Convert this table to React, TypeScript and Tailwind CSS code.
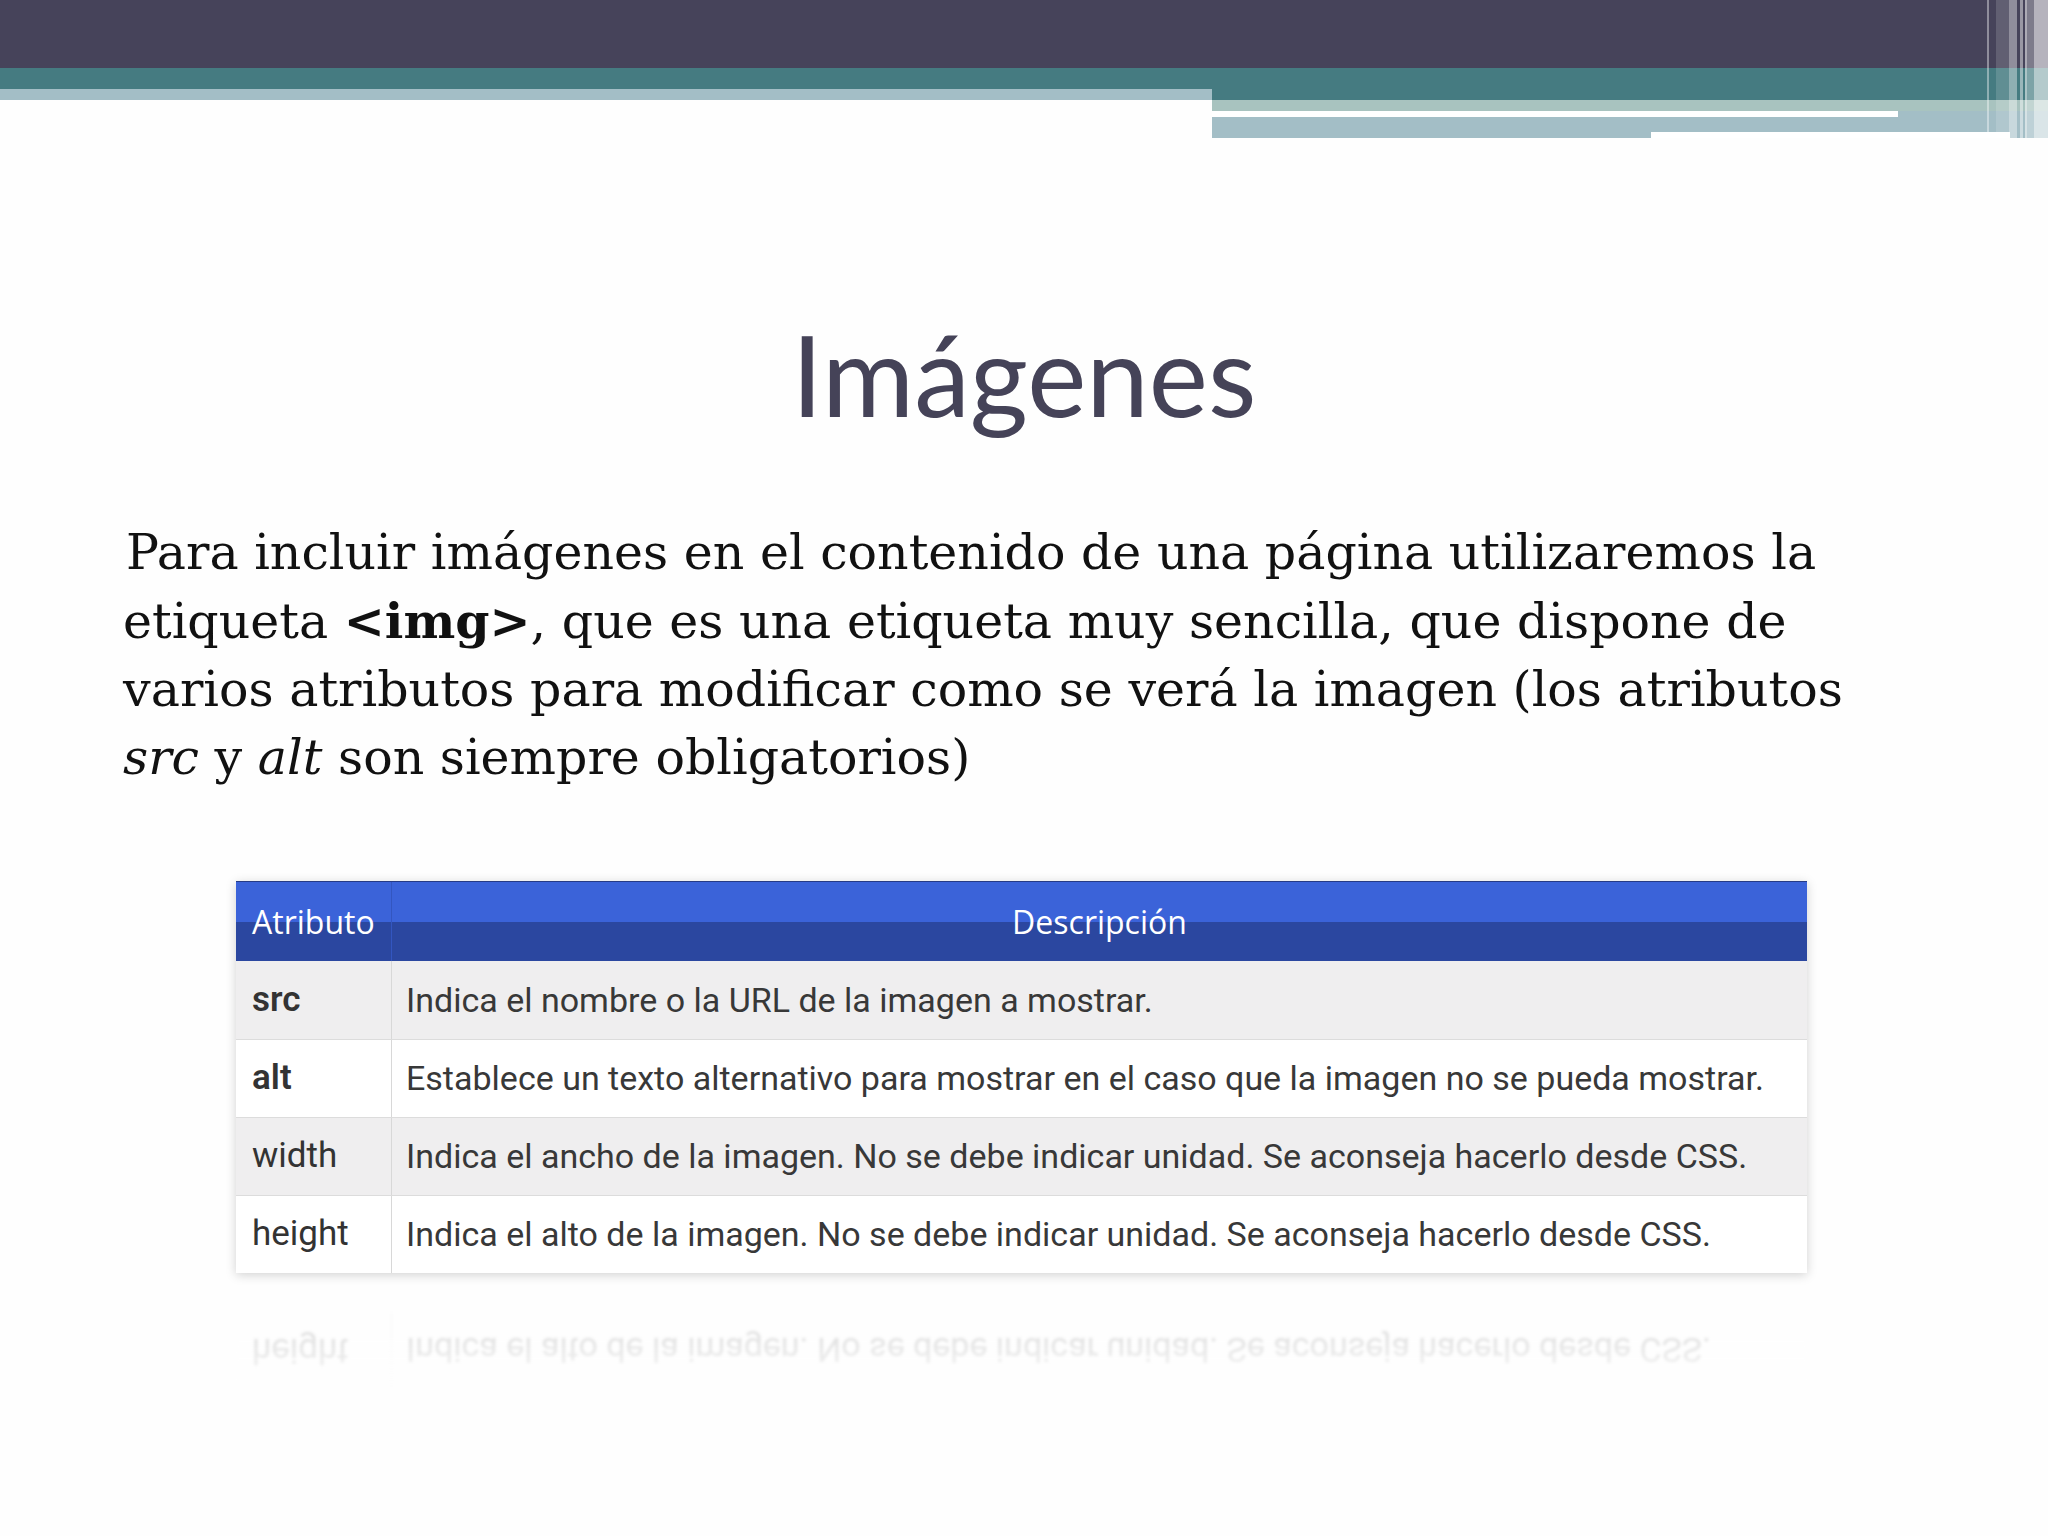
const rows = [
  { attr: "src", bold: true, desc: "Indica el nombre o la URL de la imagen a mostrar." },
  { attr: "alt", bold: true, desc: "Establece un texto alternativo para mostrar en el caso que la imagen no se pueda mostrar." },
  { attr: "width", bold: false, desc: "Indica el ancho de la imagen. No se debe indicar unidad. Se aconseja hacerlo desde CSS." },
  { attr: "height", bold: false, desc: "Indica el alto de la imagen. No se debe indicar unidad. Se aconseja hacerlo desde CSS." },
];

const cellFont = "font-['Roboto','Liberation_Sans',sans-serif]";

function Row({ attr, bold, desc, index }: { attr: string; bold: boolean; desc: string; index: number }) {
  return (
    <div
      className={`flex h-[78px] border-t border-[#dcdcdc] ${
        index % 2 === 0 ? "bg-[#efeeef]" : "bg-white"
      } ${index === 0 ? "border-t-0" : ""}`}
    >
      <div className="flex w-[156px] shrink-0 items-center border-r border-[#d8d8d8] pl-4">
        <span className={`${cellFont} text-[35px] text-[#333] ${bold ? "font-semibold" : ""}`}>
          {attr}
        </span>
      </div>
      <div className="flex min-w-0 flex-1 items-center pl-[14px]">
        <span className={`${cellFont} whitespace-nowrap text-[34px] text-[#383838]`}>{desc}</span>
      </div>
    </div>
  );
}

function TopBands() {
  return (
    <div className="relative h-[138px] w-full">
      <div className="h-[68px] bg-[#46435a]" />
      <div className="h-[21px] bg-[#457b81]" />
      <div className="flex h-[49px]">
        <div className="w-[1212px]">
          <div className="h-[11px] bg-[#a3bec6]" />
        </div>
        <div className="flex-1">
          <div className="h-[11px] bg-[#457b81]" />
          <div className="h-[11px] bg-[#a8c3bf]" />
          <div className="flex h-[6px]">
            <div className="w-[686px] bg-white" />
            <div className="flex-1 bg-[#a3bec6]" />
          </div>
          <div className="h-[15px] bg-[#a3bec6]" />
          <div className="flex h-[6px]">
            <div className="w-[439px] bg-[#a3bec6]" />
            <div className="w-[359px] bg-white" />
            <div className="flex-1 bg-[#a3bec6]" />
          </div>
        </div>
      </div>
      {/* vertical stripes, right edge */}
      <div className="absolute left-[1987px] top-0 flex h-[138px] w-[61px]">
        <div className="h-[132px] w-[2px] bg-white/40" />
        <div className="h-[132px] w-[7px]" />
        <div className="h-[132px] w-[13px] bg-white/15" />
        <div className="w-[8px] bg-white/40" />
        <div className="w-[3px]" />
        <div className="w-[3px] bg-white/45" />
        <div className="w-[2px]" />
        <div className="w-[2px] bg-white/55" />
        <div className="w-[7px] bg-white/30" />
        <div className="w-[14px] bg-white/60" />
      </div>
    </div>
  );
}

export default function App() {
  return (
    <div className="relative h-[1536px] w-[2048px] overflow-hidden bg-[#fefefe]">
      <TopBands />

      {/* Title */}
      <h1 className="mt-[180px] text-center font-['Lato',sans-serif] text-[112px] leading-none text-[#454358]">
        Imágenes
      </h1>

      {/* Body text */}
      <p className="ml-[123px] mt-[89px] font-['DejaVu_Serif','Liberation_Serif',serif] text-[49px] leading-[68px] text-[#111]">
        <span className="ml-[3px]">Para incluir imágenes en el contenido de una página utilizaremos la</span>
        <br />
        etiqueta <b>&lt;img&gt;</b>, que es una etiqueta muy sencilla, que dispone de
        <br />
        varios atributos para modificar como se verá la imagen (los atributos
        <br />
        <i>src</i> y <i>alt</i> son siempre obligatorios)
      </p>

      {/* Table */}
      <div className="ml-[236px] mt-[89px] w-[1571px] shadow-[0_2px_10px_rgba(0,0,0,0.18)]">
        <div className="flex h-[80px] border-t border-[#263b86] bg-[linear-gradient(to_bottom,#3b63d9_50%,#2b47a0_50%)]">
          <div className="flex w-[156px] items-center border-r border-[#3356c0] pl-4 font-['Open_Sans',sans-serif] text-[32px] text-white">
            Atributo
          </div>
          <div className="flex flex-1 items-center justify-center font-['Open_Sans',sans-serif] text-[32px] text-white">
            Descripción
          </div>
        </div>
        {rows.map((r, i) => (
          <Row key={r.attr} {...r} index={i} />
        ))}
      </div>

      {/* Reflection */}
      <div className="ml-[236px] mt-[38px] h-[90px] w-[1571px] opacity-[0.14] blur-[1.5px] [mask-image:linear-gradient(to_bottom,black_30%,transparent_100%)]">
        <div className="-scale-y-100">
          <Row {...rows[3]} index={3} />
        </div>
      </div>
    </div>
  );
}
